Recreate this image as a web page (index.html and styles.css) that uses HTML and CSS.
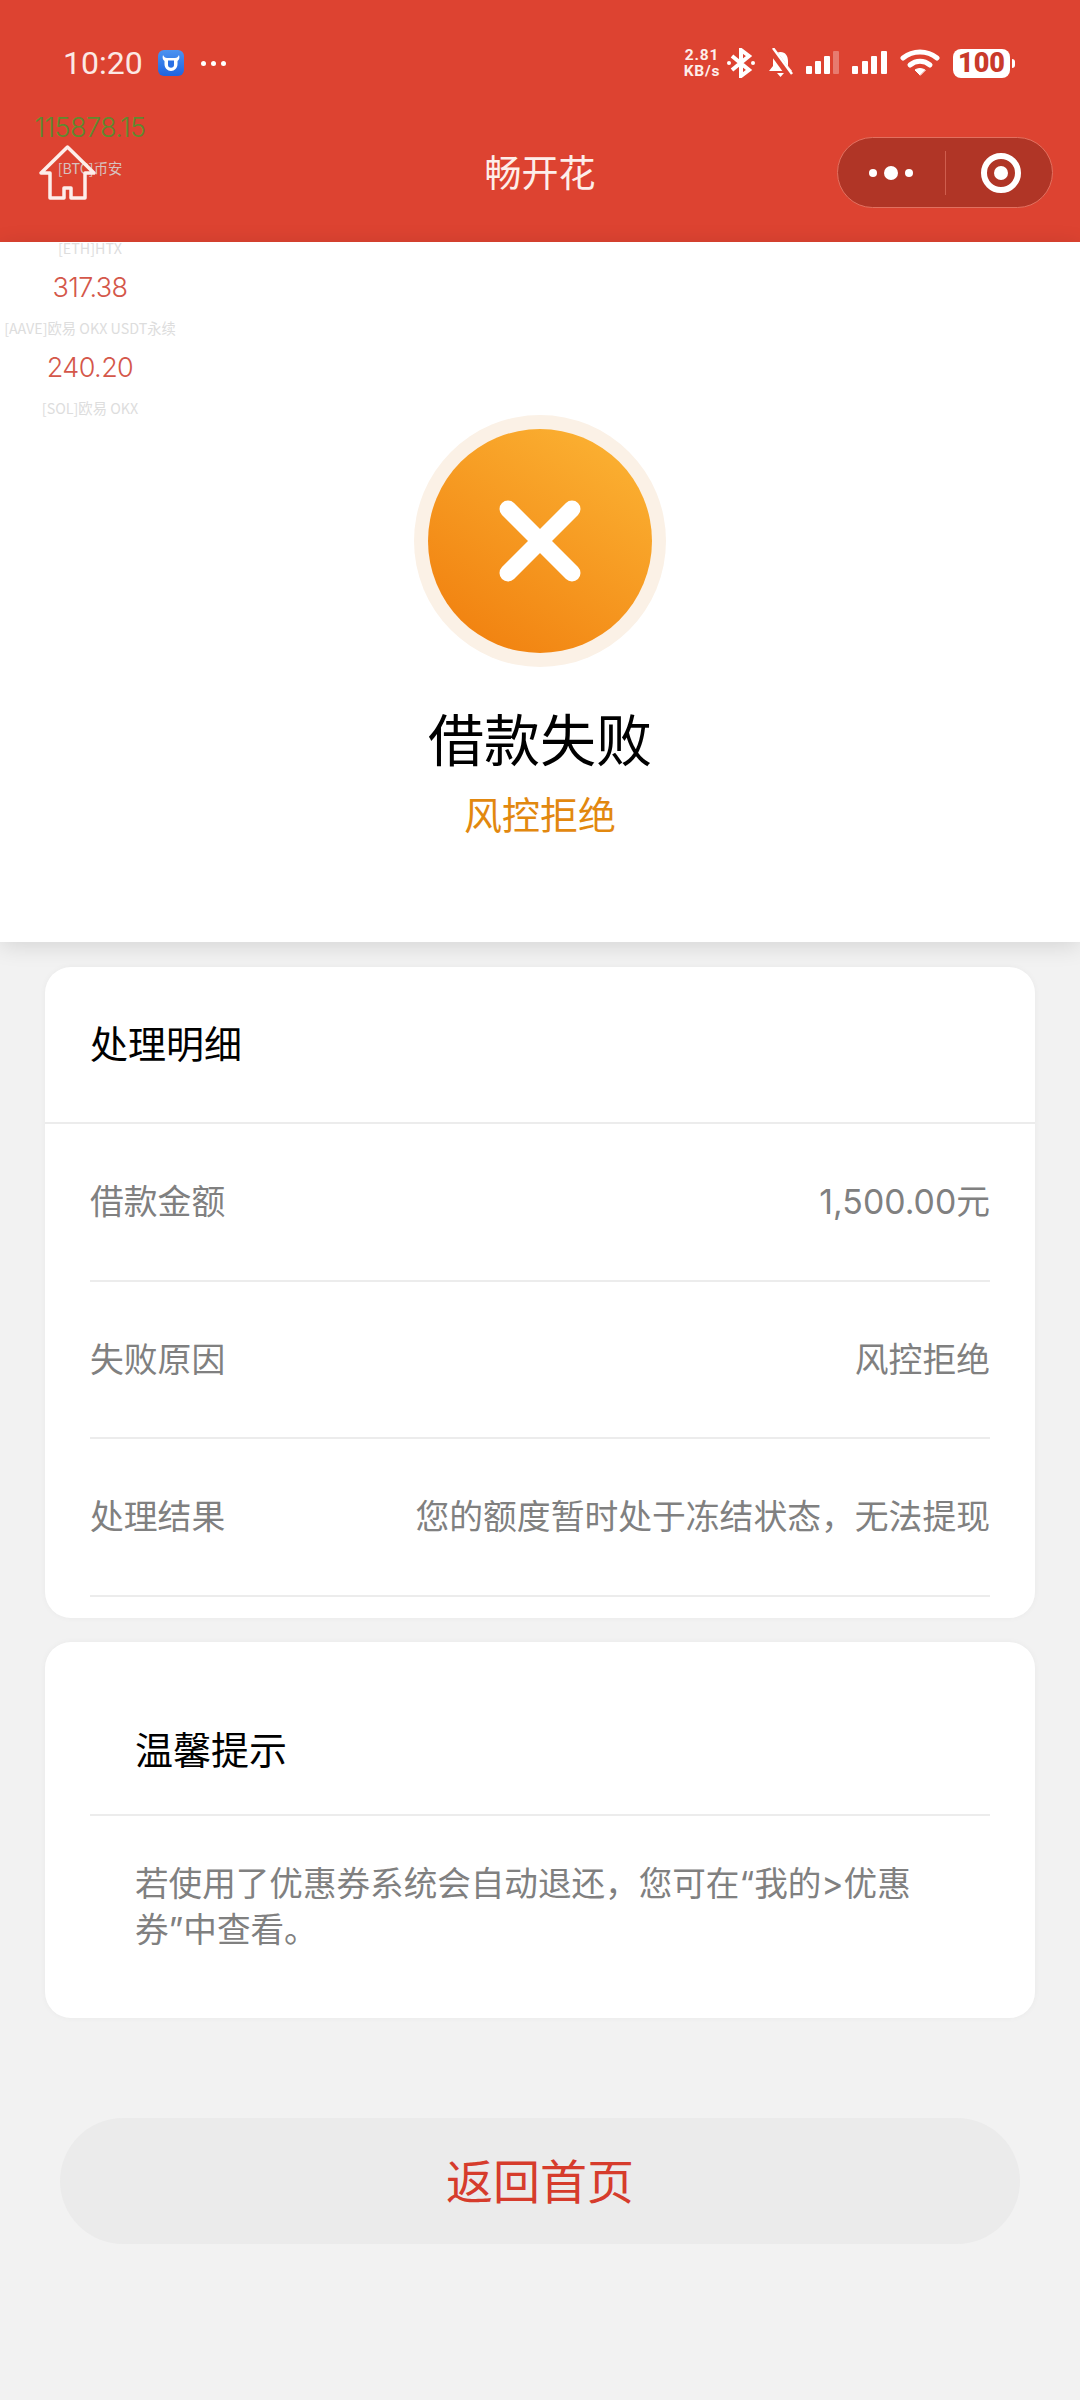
FILE: index.html
```html
<!DOCTYPE html>
<html lang="zh">
    <head>
        <meta charset="UTF-8">
        <title>畅开花</title>
        <link rel="stylesheet" href="styles.css">
    </head>
    <body>
        <div class="phone">
            <header class="topbar">
                <div class="statusbar">
                    <div class="status-left">
                        <span class="clock">10:20</span>
                        <svg class="app-badge" width="28" height="28" viewBox="0 0 28 28">
                            <defs>
                                <linearGradient id="badgeFill" x1="0" y1="0" x2="0" y2="1">
                                    <stop offset="0" stop-color="#4c93f0"/>
                                    <stop offset="1" stop-color="#1f63e0"/>
                                </linearGradient>
                            </defs>
                            <rect width="26" height="26" x="1" y="1" rx="6" fill="url(#badgeFill)"/>
                            <path d="M6 6c1 2 2 3 4 3h8c2 0 3-1 4-3 1 3 0 5-1.500 6v3c0 4-3 7-6.500 7s-6.500-3-6.500-7v-3C6 11 5 9 6 6z" fill="#fff"/>
                            <path d="M11 11.500h6v4.500c0 1.700-1.300 2.800-3 2.800s-3-1.100-3-2.800z" fill="#2a6fe4"/>
                        </svg>
                        <span class="status-dots"><i></i><i></i><i></i></span>
                    </div>
                    <div class="status-right">
                        <div class="netspeed"><div>2.81</div><div>KB/s</div></div>
                        <svg width="28" height="30" viewBox="0 0 28 30" fill="none" stroke="#fff" stroke-width="4">
                            <path d="M5 8l17 14-8 6V2l8 6L5 22"/>
                            <circle cx="2" cy="15" r="2" fill="#fff" stroke="none"/>
                            <circle cx="26" cy="15" r="2" fill="#fff" stroke="none"/>
                        </svg>
                        <svg width="25" height="30" viewBox="0 0 25 30">
                            <path d="M12.500 4c-5 0-7.500 4-7.500 9v5l-4 5h23l-4-5v-5c0-5-2.500-9-7.500-9z" fill="#fff"/>
                            <path d="M9 25h7l-3.500 4z" fill="#fff"/>
                            <path d="M2 0l21 29" stroke="#dd4331" stroke-width="7"/>
                            <path d="M5 0l19 26" stroke="#fff" stroke-width="2.500"/>
                        </svg>
                        <svg class="bars" width="33" height="24" viewBox="0 0 33 24">
                            <rect x="0" y="15" width="6" height="8" rx="1" fill="#fff"/>
                            <rect x="9" y="10" width="6" height="13" rx="1" fill="#fff"/>
                            <rect x="18" y="5" width="6" height="18" rx="1" fill="#fff"/>
                            <rect x="27" y="0" width="6" height="23" rx="1" fill="#fff" opacity=".3"/>
                        </svg>
                        <svg class="bars" width="35" height="24" viewBox="0 0 35 24">
                            <rect x="0" y="15" width="6" height="8" rx="1" fill="#fff"/>
                            <rect x="10" y="10" width="6" height="13" rx="1" fill="#fff"/>
                            <rect x="19" y="5" width="6" height="18" rx="1" fill="#fff"/>
                            <rect x="29" y="0" width="6" height="23" rx="1" fill="#fff"/>
                        </svg>
                        <svg width="40" height="28" viewBox="0 0 40 28" fill="none" stroke="#fff" stroke-width="5" stroke-linecap="round">
                            <path d="M3 9c10-8 24-8 34 0"/>
                            <path d="M10 16c6-5 14-5 20 0"/>
                            <path d="M20 26l-5-5c3-2 7-2 10 0z" fill="#fff" stroke-width="1"/>
                        </svg>
                        <div class="battery"><span class="battery-body">100</span><span class="battery-tip"></span></div>
                    </div>
                </div>
                <div class="navbar">
                    <svg class="home-icon" width="60" height="56" viewBox="0 0 60 56" fill="none" stroke="#fdeeea" stroke-width="3.500" stroke-linejoin="round" stroke-linecap="round">
                        <path d="M12 54V29H3L29.500 3 56 29H47V54H33V44H26V54z"/>
                    </svg>
                    <h1 class="nav-title">畅开花</h1>
                    <div class="capsule">
                        <div class="capsule-part">
                            <span class="dot-small"></span><span class="dot-big"></span><span class="dot-small"></span>
                        </div>
                        <span class="capsule-line"></span>
                        <div class="capsule-part">
                            <span class="target"></span>
                        </div>
                    </div>
                </div>
            </header>

            <div class="ticker">
                <div class="price green">115878.15</div>
                <div class="market">[BTC]币安</div>
                <div class="price hidden-price">4521.10</div>
                <div class="market">[ETH]HTX</div>
                <div class="price">317.38</div>
                <div class="market">[AAVE]欧易 OKX USDT永续</div>
                <div class="price">240.20</div>
                <div class="market">[SOL]欧易 OKX</div>
            </div>

            <section class="hero">
                <div class="fail-ring">
                    <div class="fail-circle">
                        <svg width="84" height="84" viewBox="0 0 84 84" stroke="#fff" stroke-width="17" stroke-linecap="round">
                            <path d="M10 10l64 64M74 10L10 74"/>
                        </svg>
                    </div>
                </div>
                <h2 class="hero-title">借款失败</h2>
                <p class="hero-sub">风控拒绝</p>
            </section>

            <section class="card detail-card">
                <div class="card-head">处理明细</div>
                <div class="rows">
                    <div class="row"><span>借款金额</span><span>1,500.00元</span></div>
                    <div class="row"><span>失败原因</span><span>风控拒绝</span></div>
                    <div class="row"><span>处理结果</span><span>您的额度暂时处于冻结状态，无法提现</span></div>
                </div>
            </section>

            <section class="card tip-card">
                <div class="tip-head">温馨提示</div>
                <p class="tip-text">若使用了优惠券系统会自动退还，您可在“我的&gt;优惠券”中查看。</p>
            </section>

            <div class="back-wrap">
                <button class="back-btn">返回首页</button>
            </div>
        </div>
    </body>
</html>
```
FILE: styles.css
```css
* {
    box-sizing: border-box;
}
body {
    margin: 0;
    background-color: #f2f2f2;
    font-family: "Noto Sans CJK SC", "Noto Sans", sans-serif;
}
.phone {
    position: relative;
    width: 1080px;
    height: 2400px;
    overflow: hidden;
    background-color: #f2f2f2;
}

/* red top area */
.topbar {
    height: 242px;
    background-color: #dd4331;
    color: #fff;
}
.statusbar {
    height: 120px;
    padding: 44px 65px 0 63px;
    display: flex;
    justify-content: space-between;
    align-items: flex-start;
}
.status-left {
    display: flex;
    align-items: center;
    gap: 14px;
    height: 38px;
}
.clock {
    font-family: Roboto, sans-serif;
    font-size: 32px;
    font-weight: 400;
    color: #fbe9e5;
}
.status-dots {
    display: flex;
    gap: 5px;
    margin-left: 2px;
}
.status-dots i {
    width: 5px;
    height: 5px;
    background-color: #fff;
    border-radius: 50%;
}
.status-right {
    display: flex;
    align-items: center;
    gap: 13px;
    height: 38px;
}
.netspeed {
    font-family: Roboto, sans-serif;
    font-size: 15.500px;
    font-weight: 700;
    line-height: 16px;
    letter-spacing: .8px;
    text-align: center;
    width: 40px;
    margin-right: -8px;
    color: #fdeeea;
}
.battery {
    display: flex;
    align-items: center;
}
.battery-body {
    width: 57px;
    height: 29px;
    background-color: #fff;
    border-radius: 8px;
    color: #c93a2a;
    font-family: Roboto, sans-serif;
    font-size: 27px;
    font-weight: 900;
    line-height: 29px;
    text-align: center;
}
.battery-tip {
    width: 3px;
    height: 9px;
    margin-left: 2px;
    background-color: #fff;
    border-radius: 0 3px 3px 0;
}
.navbar {
    position: relative;
    height: 122px;
    padding: 17px 27px 0 0;
    display: flex;
    justify-content: flex-end;
    align-items: flex-start;
}
.home-icon {
    position: absolute;
    left: 38px;
    top: 24px;
    z-index: 3;
}
.nav-title {
    position: absolute;
    left: 0;
    right: 0;
    top: 26px;
    margin: 0;
    text-align: center;
    font-size: 37px;
    font-weight: 400;
    line-height: 50px;
    color: #fdeeea;
}
.capsule {
    width: 216px;
    height: 71px;
    display: flex;
    align-items: center;
    background-color: #b03526;
    border: 1px solid #e2705f;
    border-radius: 36px;
}
.capsule-part {
    flex: 1;
    display: flex;
    justify-content: center;
    align-items: center;
    gap: 7px;
}
.capsule-line {
    width: 1px;
    height: 44px;
    background-color: #cf5e4e;
}
.dot-small {
    width: 8px;
    height: 8px;
    border-radius: 50%;
    background-color: #fff;
}
.dot-big {
    width: 14px;
    height: 14px;
    border-radius: 50%;
    background-color: #fff;
}
.target {
    width: 40px;
    height: 40px;
    margin-left: 4px;
    border: 6px solid #fff;
    border-radius: 50%;
    display: flex;
    justify-content: center;
    align-items: center;
}
.target::after {
    content: "";
    width: 14px;
    height: 14px;
    background-color: #fff;
    border-radius: 50%;
}

/* floating price list, sits over the page */
.ticker {
    position: absolute;
    left: 0;
    top: 108px;
    width: 180px;
    text-align: center;
    white-space: nowrap;
    z-index: 2;
}
.ticker .price {
    height: 40px;
    font-family: Inter, sans-serif;
    font-size: 27px;
    font-weight: 300;
    line-height: 40px;
    letter-spacing: -.6px;
    color: #d4574a;
}
.ticker .green {
    color: #5f8a2f;
}
.ticker .hidden-price {
    visibility: hidden;
}
.ticker .market {
    height: 40px;
    font-size: 14.300px;
    line-height: 40px;
    color: #d8d8d8;
    opacity: .85;
}

/* result block */
.hero {
    height: 700px;
    padding-top: 173px;
    background-color: #fff;
    box-shadow: 0 4px 22px rgba(0, 0, 0, .12);
    display: flex;
    flex-direction: column;
    align-items: center;
}
.fail-ring {
    width: 252px;
    height: 252px;
    padding: 14px;
    background-color: #fbf1e6;
    border-radius: 50%;
}
.fail-circle {
    width: 224px;
    height: 224px;
    border-radius: 50%;
    background: linear-gradient(213deg, #fcb636, #f07c0c);
    display: flex;
    justify-content: center;
    align-items: center;
}
.hero-title {
    margin: 28px 0 0;
    font-size: 56px;
    font-weight: 400;
    line-height: 84px;
    color: #000;
}
.hero-sub {
    margin: 7px 0 0;
    font-size: 38px;
    line-height: 54px;
    color: #e2880f;
}

/* cards */
.card {
    margin: 0 45px;
    background-color: #fff;
    border-radius: 26px;
    box-shadow: 0 0 6px rgba(0, 0, 0, .04);
}
.detail-card {
    margin-top: 25px;
    height: 651px;
}
.card-head {
    height: 157px;
    padding-left: 45px;
    font-size: 38px;
    line-height: 150px;
    color: #000;
    border-bottom: 2px solid #ececec;
}
.rows {
    padding: 0 45px;
}
.row {
    height: 157.500px;
    padding-bottom: 4px;
    display: flex;
    justify-content: space-between;
    align-items: center;
    font-family: Inter, "Noto Sans CJK SC", sans-serif;
    font-size: 33.800px;
    font-weight: 400;
    color: #808080;
    border-bottom: 2px solid #ececec;
}
.tip-card {
    margin-top: 24px;
    height: 376px;
    padding: 0 45px;
}
.tip-head {
    height: 174px;
    padding: 79px 0 0 45px;
    font-size: 38px;
    line-height: 54px;
    color: #000;
    border-bottom: 2px solid #ececec;
}
.tip-text {
    margin: 0;
    padding: 45px 45px 0;
    font-family: Inter, "Noto Sans CJK SC", sans-serif;
    font-size: 33.600px;
    line-height: 46px;
    color: #808080;
}
.back-wrap {
    padding: 100px 60px 0;
}
.back-btn {
    display: block;
    width: 100%;
    height: 126px;
    padding-bottom: 6px;
    border: none;
    border-radius: 63px;
    background-color: #ebebeb;
    font-family: inherit;
    font-size: 47px;
    color: #d63c2c;
}
```
